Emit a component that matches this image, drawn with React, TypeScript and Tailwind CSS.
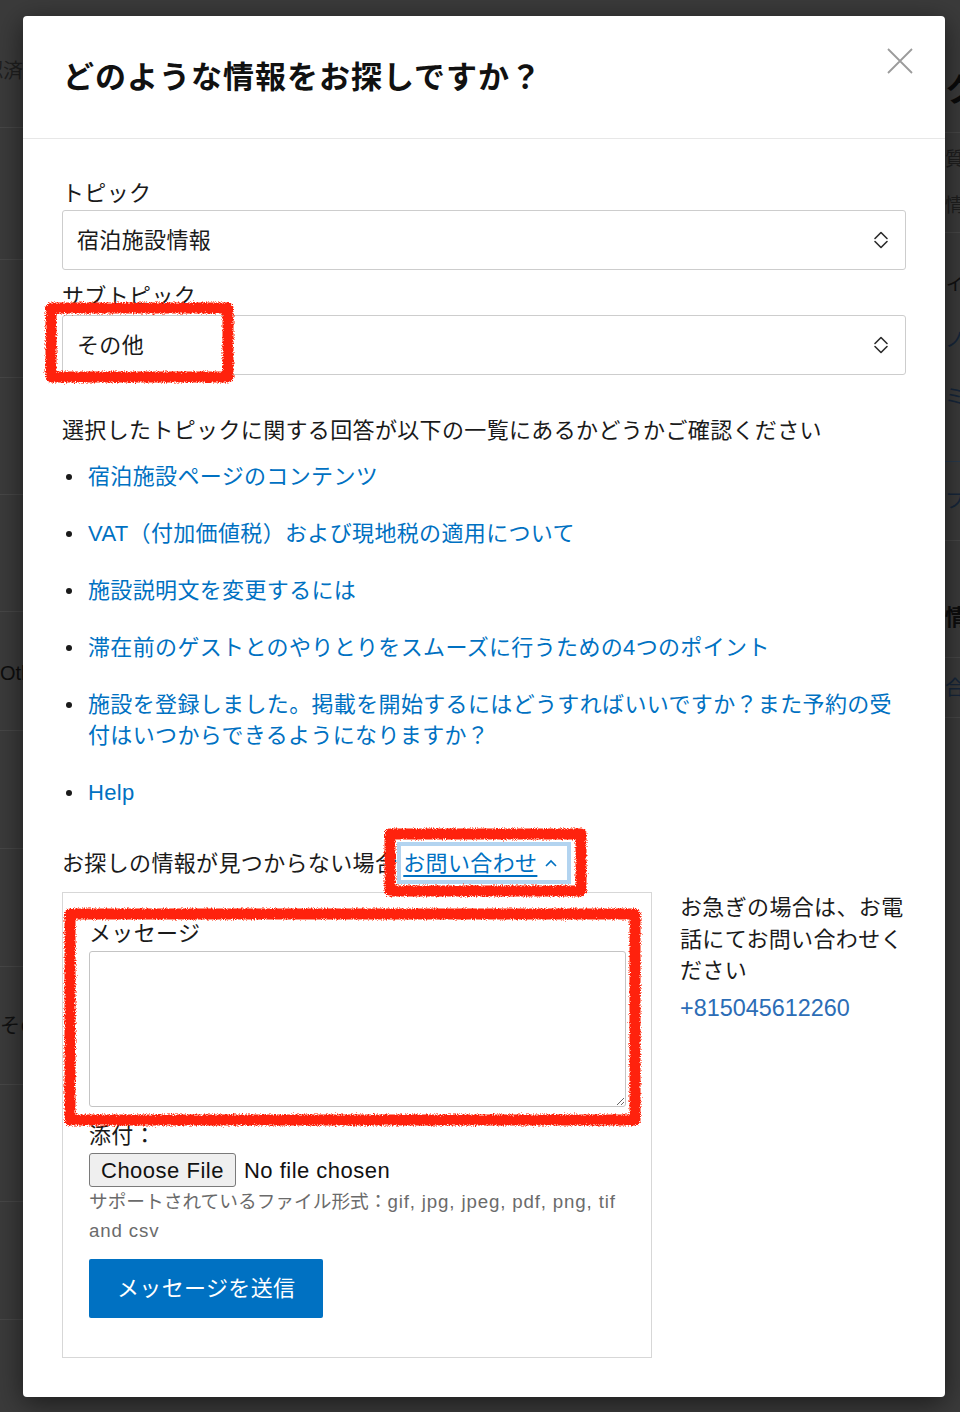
import React from "react";

// ─── Backdrop (the page under the dimmed overlay) ────────────────────────────

function LeftStrip() {
  return (
    <div className="flex w-[23px] flex-col overflow-hidden text-[20px]">
      <div className="flex h-[128px] items-center justify-end whitespace-nowrap border-b border-[#474747] pt-[14px] text-[#1f1f1f]">
        確認済
      </div>
      <div className="h-[132px] border-b border-[#474747]" />
      <div className="h-[118px] border-b border-[#474747]" />
      <div className="h-[117px] border-b border-[#474747]" />
      <div className="h-[117px] border-b border-[#474747]" />
      <div className="flex h-[119px] items-center whitespace-nowrap border-b border-[#474747] pt-[4px] text-[#0d0d0d]">
        Other
      </div>
      <div className="h-[118px] border-b border-[#474747]" />
      <div className="h-[118px] border-b border-[#474747]" />
      <div className="flex h-[118px] items-center whitespace-nowrap border-b border-[#474747] text-[#111]">
        その他
      </div>
      <div className="h-[117px] border-b border-[#474747]" />
      <div className="h-[118px] border-b border-[#474747]" />
    </div>
  );
}

function RightStrip() {
  return (
    <div className="flex w-[15px] flex-col overflow-hidden whitespace-nowrap">
      <div className="flex h-[133px] items-center border-b border-[#474747] pt-[48px] text-[32px] font-bold text-[#0a0a0a]">
        クイック
      </div>
      <div className="flex h-[100px] flex-col justify-center border-b border-[#474747] text-[19px] leading-[46px] text-[#1e1e1e]">
        <span>質問</span>
        <span>情報</span>
      </div>
      <div className="flex h-[229px] flex-col border-b border-[#2a3a4c] pt-[22px] text-[20px] leading-[57px]">
        <span className="text-[#111]">ィ</span>
        <span className="text-[#16263a]">ノ</span>
        <span className="text-[#16263a]">ミ</span>
      </div>
      <div className="flex h-[79px] items-center border-b border-[#474747] text-[20px] text-[#16263a]">
        フ
      </div>
      <div className="flex h-[117px] items-center border-b border-[#474747] pt-[36px] text-[22px] font-bold text-[#0d0d0d]">
        情報
      </div>
      <div className="flex h-[60px] items-center border-b border-[#474747] text-[20px] text-[#16263a]">
        合
      </div>
    </div>
  );
}

// ─── Icons ───────────────────────────────────────────────────────────────────

function UpDownIcon() {
  return (
    <svg width="16" height="20" viewBox="0 0 16 20" fill="none" aria-hidden>
      <path d="M2 8.5 8 2.5l6 6" stroke="#2b2b2b" strokeWidth="1.6" strokeLinecap="round" strokeLinejoin="round" />
      <path d="M2 11.5 8 17.5l6-6" stroke="#2b2b2b" strokeWidth="1.6" strokeLinecap="round" strokeLinejoin="round" />
    </svg>
  );
}

// ─── Select ──────────────────────────────────────────────────────────────────

function Select({ value }: { value: string }) {
  return (
    <div className="relative">
      <select
        defaultValue={value}
        className="h-[60px] w-full appearance-none rounded-[3px] border border-[#cdcdcd] bg-white pl-[14px] text-[22px] text-[#1a1a1a] outline-none"
      >
        <option value={value}>{value}</option>
      </select>
      <span className="pointer-events-none absolute right-[17px] top-[20px]">
        <UpDownIcon />
      </span>
    </div>
  );
}

// ─── Data ────────────────────────────────────────────────────────────────────

const links = [
  "宿泊施設ページのコンテンツ",
  "VAT（付加価値税）および現地税の適用について",
  "施設説明文を変更するには",
  "滞在前のゲストとのやりとりをスムーズに行うための4つのポイント",
  "施設を登録しました。掲載を開始するにはどうすればいいですか？また予約の受付はいつからできるようになりますか？",
  "Help",
];

// ─── Annotations (red marker boxes drawn over the screenshot) ────────────────

function Annotations() {
  return (
    <svg className="pointer-events-none absolute left-0 top-0" width="960" height="1412" aria-hidden>
      <defs>
        <filter id="marker" x="-10%" y="-10%" width="120%" height="120%">
          <feTurbulence type="fractalNoise" baseFrequency="0.9" numOctaves="2" seed="7" result="noise" />
          <feDisplacementMap in="SourceGraphic" in2="noise" scale="5" xChannelSelector="R" yChannelSelector="G" />
        </filter>
      </defs>
      <g filter="url(#marker)" fill="none" stroke="#ff2309" strokeWidth="11" strokeLinejoin="round">
        <rect x="51" y="308" width="177" height="69" />
        <rect x="390" y="834" width="191" height="57" />
        <rect x="70" y="914" width="565" height="206" />
      </g>
    </svg>
  );
}

// ─── App ─────────────────────────────────────────────────────────────────────

export default function App() {
  return (
    <div className="relative h-[1412px] w-[960px] overflow-hidden bg-[#3b3b3b] font-['Liberation_Sans','Noto_Sans_CJK_JP',sans-serif]">
      <div className="flex h-full justify-between">
        <LeftStrip />
        <RightStrip />
      </div>

      {/* ── Modal ─────────────────────────────────────────────────────────── */}
      <div className="absolute left-[23px] top-[16px] w-[922px] rounded-[4px] bg-white text-[#1a1a1a] shadow-[0_6px_28px_rgba(0,0,0,0.55)]">
        <header className="relative border-b border-[#e7e7e7] px-[40px] pb-[40px] pt-[42px]">
          <h2 className="text-[31px] font-bold leading-[40px] tracking-[1px] text-[#111]">
            どのような情報をお探しですか？
          </h2>
          <button aria-label="閉じる" className="absolute right-[32px] top-[32px]">
            <svg width="26" height="26" viewBox="0 0 26 26" aria-hidden>
              <path d="M1 1l24 24M25 1 1 25" stroke="#9b9b9b" strokeWidth="1.8" />
            </svg>
          </button>
        </header>

        <div className="px-[39px] pb-[39px] pt-[39px] text-[22px] tracking-[0.35px]">
          <label className="mb-[2px] block pt-[2px] leading-[28px]">トピック</label>
          <Select value="宿泊施設情報" />

          <label className="mb-[4px] mt-[13px] block leading-[28px]">サブトピック</label>
          <Select value="その他" />

          <p className="mt-[41px] leading-[30px]">
            選択したトピックに関する回答が以下の一覧にあるかどうかご確認ください
          </p>

          <ul className="mt-[15px] flex flex-col gap-[26px] pl-[4px]">
            {links.map((t) => (
              <li key={t} className="flex items-start">
                <span className="flex h-[31px] w-[22px] shrink-0 items-center">
                  <span className="h-[6px] w-[6px] rounded-full bg-[#1a1a1a]" />
                </span>
                <a href="#" className="leading-[31px] text-[#0071c2]">
                  {t}
                </a>
              </li>
            ))}
          </ul>

          <div className="mt-[34px] flex h-[42px] items-center">
            <span>お探しの情報が見つからない場合</span>
            <a
              href="#"
              className="flex h-[42px] items-center gap-[8px] border-[4px] border-[#b3d4f0] pl-[2px] pr-[10px] text-[#0071c2]"
            >
              <span className="underline decoration-[1.5px] underline-offset-[4px]">お問い合わせ</span>
              <svg width="12" height="8" viewBox="0 0 12 8" fill="none" aria-hidden>
                <path d="M1 7 6 2l5 5" stroke="#0071c2" strokeWidth="1.6" />
              </svg>
            </a>
          </div>

          <div className="mt-[8px] flex items-start gap-[28px]">
            {/* ── Contact form ───────────────────────────────────────────── */}
            <form className="w-[590px] border border-[#d7d7d7] pb-[39px] pl-[26px] pr-[25px] pt-[25px]">
              <label className="block leading-[31px]">メッセージ</label>
              <textarea className="mt-[2px] block h-[156px] w-full rounded-[3px] border border-[#c4c4c4] outline-none" />

              <label className="mt-[14px] block leading-[30px]">添付：</label>
              <div className="mt-[2px] flex h-[34px] items-center gap-[8px] tracking-[0.5px]">
                <button
                  type="button"
                  className="h-[34px] rounded-[3px] border border-[#7a7a7a] bg-[#efefef] px-[11px] text-[22px] text-[#111]"
                >
                  Choose File
                </button>
                <span className="text-[22px] text-[#111]">No file chosen</span>
              </div>
              <p className="text-[18.7px] leading-[29px] tracking-normal text-[#6b6b6b]">
                サポートされているファイル形式：<span className="tracking-[0.85px]">gif, jpg, jpeg, pdf, png, tif and csv</span>
              </p>

              <button
                type="button"
                className="mt-[14px] h-[59px] rounded-[2px] bg-[#0071c2] px-[28px] text-[22px] text-white"
              >
                メッセージを送信
              </button>
            </form>

            {/* ── Phone ─────────────────────────────────────────────────── */}
            <div className="w-[226px]">
              <p className="leading-[31.5px]">お急ぎの場合は、お電話にてお問い合わせください</p>
              <a href="#" className="mt-[6px] block text-[23.4px] leading-[30px] tracking-normal text-[#2c6db6]">
                +815045612260
              </a>
            </div>
          </div>
        </div>
      </div>

      <Annotations />
    </div>
  );
}
